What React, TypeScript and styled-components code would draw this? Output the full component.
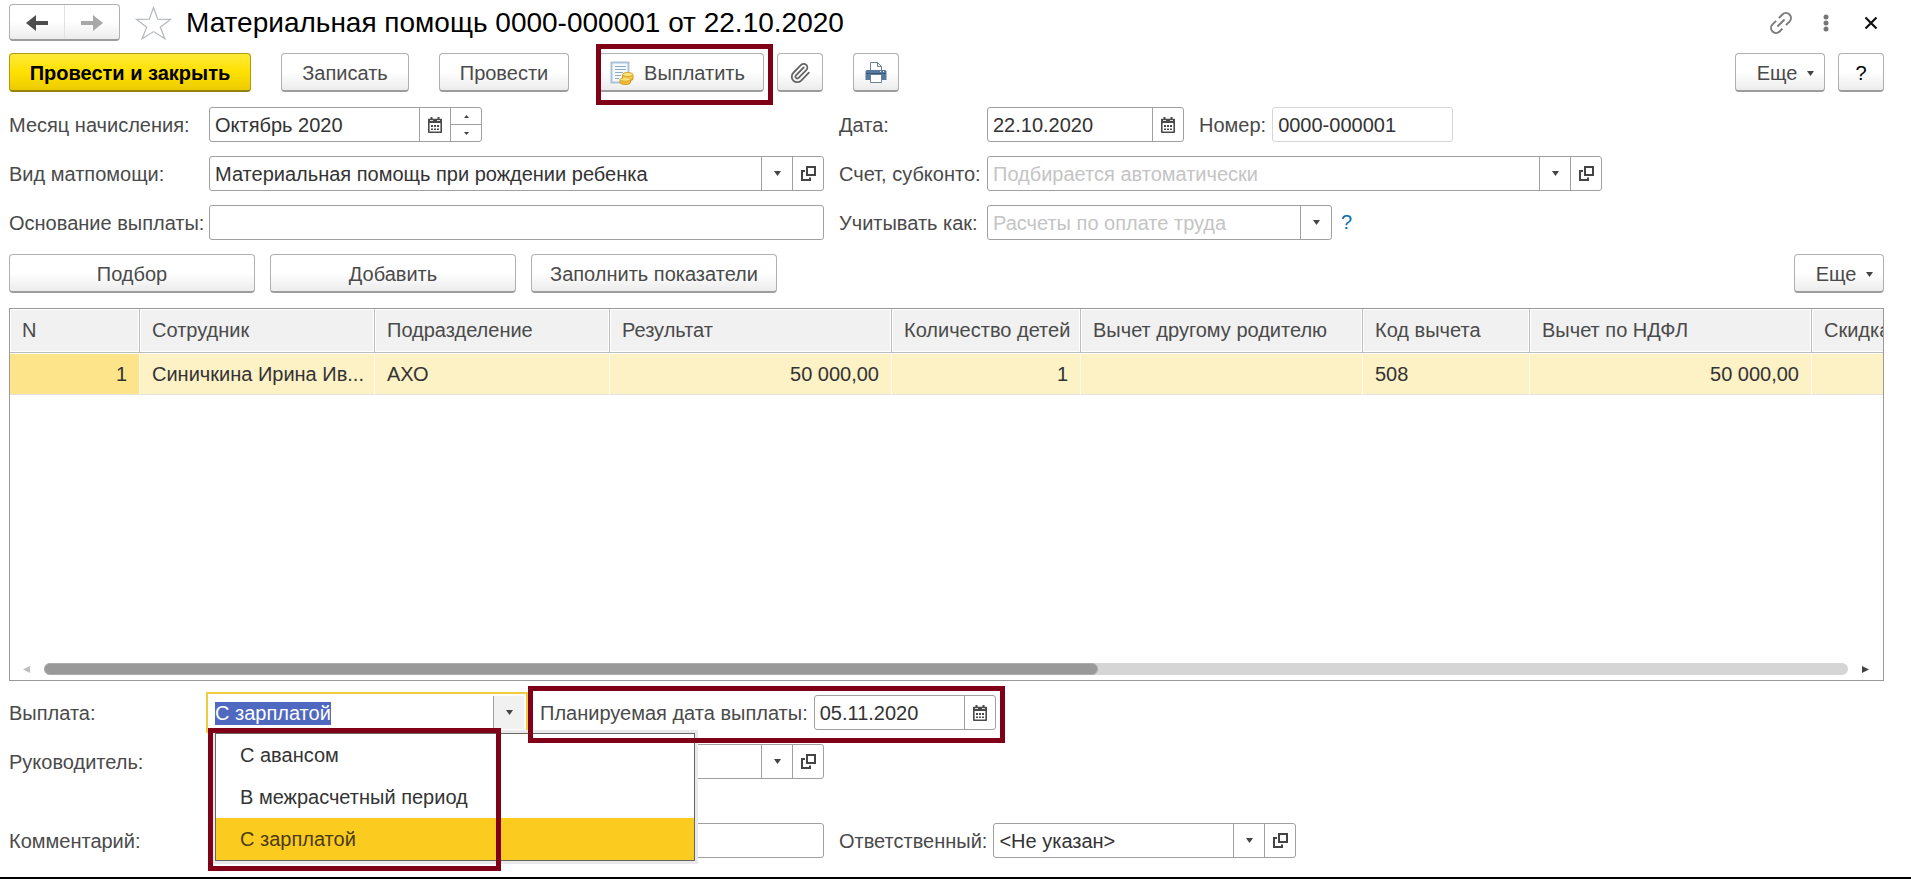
import React, { useEffect, useRef } from "react";
import styled, { createGlobalStyle, css } from "styled-components";
import { Paperclip } from "lucide-react";

const color = {
  text: "#4a4a4a",
  value: "#333333",
  line: "#a0a0a0",
  muted: "#c4c4c4",
  mark: "#800018",
  accent: "#fbcb20",
};

const GlobalStyle = createGlobalStyle`
  *, *::before, *::after { box-sizing: border-box; }
  body {
    margin: 0;
    background: #ffffff;
    color: ${color.text};
    font: 20px/23px "Liberation Sans", Arial, sans-serif;
  }
  button, input { font: inherit; color: inherit; }
  button { cursor: pointer; }
`;

const Page = styled.main`
  display: flex;
  flex-direction: column;
  min-height: 100vh;
  padding: 4px 27px 19px 9px;
  border-bottom: 2px solid #000000;
`;

const TitleBar = styled.header`
  display: flex;
  align-items: center;
  height: 37px;
  margin-bottom: 12px;
`;

const raised = css`
  border: 1px solid #b0b0b0;
  border-bottom: 2px solid #9c9c9c;
  border-radius: 4px;
  background: linear-gradient(#ffffff 50%, #ececec);
`;

const HistoryNav = styled.nav`
  ${raised}
  display: flex;
  width: 111px;
  height: 37px;
`;

const HistoryButton = styled.button`
  display: flex;
  flex: 1;
  align-items: center;
  justify-content: center;
  padding: 2px 0 0;
  border: 0;
  background: none;

  & + & {
    border-left: 1px solid #e2e2e2;
  }
`;

const PlainButton = styled.button`
  display: flex;
  align-items: center;
  justify-content: center;
  min-width: 26px;
  padding: 0;
  border: 0;
  background: none;
`;

const StarButton = styled(PlainButton)`
  margin: 0 14px 0 15px;
`;

const Title = styled.h1`
  flex: 1;
  margin: 0;
  color: #000000;
  font-size: 28px;
  font-weight: 400;
  line-height: 32px;
  white-space: nowrap;
`;

const WindowTools = styled.div`
  display: flex;
  align-items: center;
  gap: 19px;
`;

const Toolbar = styled.div<{ $gap: number; $bottom: number }>`
  display: flex;
  align-items: center;
  gap: ${(p) => p.$gap}px;
  margin-bottom: ${(p) => p.$bottom}px;
`;

const ButtonGroup = styled.div`
  display: flex;
  gap: 13px;
`;

const EndGroup = styled(ButtonGroup)`
  margin-left: auto;
`;

const Button = styled.button<{ $width: number }>`
  ${raised}
  display: flex;
  align-items: center;
  justify-content: center;
  gap: 10px;
  width: ${(p) => p.$width}px;
  height: 39px;
  padding: 2px 0 0;
  white-space: nowrap;
`;

const PrimaryButton = styled(Button)`
  border-color: #b09a10;
  border-bottom-color: #95820c;
  background: linear-gradient(#ffe93a, #ffe100 50%, #eccb00);
  color: #000000;
  font-weight: 700;
`;

const PayButton = styled(Button)`
  padding-right: 8px;
`;

const HelpButton = styled(Button)`
  color: #000000;
`;

const MoreButton = styled(Button)`
  padding-left: 11px;
`;

const Marked = styled.div`
  position: relative;
  display: flex;
  align-items: center;
`;

const Mark = styled.span<{ $inset: string }>`
  position: absolute;
  inset: ${(p) => p.$inset};
  z-index: 3;
  border: 5px solid ${color.mark};
  pointer-events: none;
`;

const Form = styled.div`
  display: grid;
  grid-template-columns: minmax(0, 815px) minmax(0, 1fr);
  gap: 14px 15px;
  margin-bottom: 14px;
`;

const FooterForm = styled(Form)`
  margin: 14px 0 0;
`;

const Row = styled.div<{ $tall?: boolean }>`
  display: flex;
  align-items: center;
  min-width: 0;
  margin-bottom: ${(p) => (p.$tall ? 30 : 0)}px;
`;

const WideRow = styled(Row)`
  grid-column: 1 / -1;
`;

const Label = styled.label<{ $width?: number }>`
  flex: none;
  width: ${(p) => (p.$width ? `${p.$width}px` : "auto")};
  padding-top: 2px;
  white-space: nowrap;
`;

const InlineLabel = styled(Label)`
  margin: 0 6px 0 15px;
`;

const EndLabel = styled(Label)`
  margin-right: 6px;
`;

const Field = styled.div<{ $width: number; $pale?: boolean; $focused?: boolean }>`
  display: flex;
  flex: 0 1 auto;
  width: ${(p) => p.$width}px;
  min-width: 0;
  height: 35px;
  border: 1px solid ${(p) => (p.$focused ? "transparent" : p.$pale ? "#d6d6d6" : color.line)};
  border-radius: ${(p) => (p.$focused ? 0 : 3)}px;
  background: #ffffff;
  box-shadow: ${(p) => (p.$focused ? "0 0 0 1px #ffffff, 0 0 0 3px #f2cc3c" : "none")};
`;

const TextInput = styled.input`
  flex: 1;
  width: 0;
  min-width: 0;
  padding: 2px 4px 0 5px;
  border: 0;
  outline: 0;
  background: none;
  color: ${color.value};

  &::placeholder {
    color: ${color.muted};
    opacity: 1;
  }
  &::selection {
    background: #5069c0;
    color: #ffffff;
  }
`;

const FieldButton = styled.button<{ $shaded?: boolean }>`
  display: flex;
  flex: none;
  align-items: center;
  justify-content: center;
  width: 31px;
  padding: 0;
  border: 0;
  border-left: 1px solid ${color.line};
  background: ${(p) => (p.$shaded ? "#f1f1f1" : "none")};
`;

const Spinner = styled.div`
  display: flex;
  flex: none;
  flex-direction: column;
  width: 31px;
  border-left: 1px solid ${color.line};
`;

const SpinButton = styled.button`
  display: flex;
  flex: 1;
  align-items: center;
  justify-content: center;
  padding: 0;
  border: 0;
  background: none;

  & + & {
    border-top: 1px solid ${color.line};
  }
`;

const HelpLink = styled.a`
  margin-left: 9px;
  color: #0f6cac;
  text-decoration: none;
`;

const TablePanel = styled.section`
  display: flex;
  flex: 1;
  flex-direction: column;
  min-height: 200px;
  border: 1px solid #999999;
`;

const TableViewport = styled.div`
  flex: 1;
  overflow: hidden;
`;

const Table = styled.table`
  width: 2084px;
  border-collapse: separate;
  border-spacing: 0;
  table-layout: fixed;
`;

const HeadCell = styled.th`
  height: 44px;
  padding: 0 6px 0 12px;
  border-right: 1px solid #bdbdbd;
  border-bottom: 1px solid #bdbdbd;
  background: #f1f1f1;
  box-shadow: inset 0 0 0 1px #ffffff;
  font-weight: 400;
  text-align: left;
  white-space: nowrap;
`;

const Cell = styled.td<{ $right?: boolean; $current?: boolean }>`
  height: 42px;
  padding: 0 ${(p) => (p.$right ? 12 : 4)}px 0 12px;
  overflow: hidden;
  border-top: 1px solid #ffffff;
  border-right: 1px solid #fffaea;
  border-bottom: 1px solid #e4e4dc;
  background: ${(p) => (p.$current ? "#fde48b" : "#fdf1c6")};
  color: ${color.value};
  text-align: ${(p) => (p.$right ? "right" : "left")};
  white-space: nowrap;
`;

const ScrollRow = styled.div`
  display: flex;
  align-items: center;
  gap: 14px;
  padding: 0 14px 5px 13px;
`;

const ScrollTrack = styled.div`
  flex: 1;
  height: 12px;
  border-radius: 6px;
  background: #d5d5d5;
`;

const ScrollThumb = styled.div`
  width: 58.4%;
  height: 12px;
  border: 1px solid #acacac;
  border-radius: 6px;
  background: #999999;
`;

const Combo = styled.div`
  position: relative;
  display: flex;
  flex: 0 1 316px;
  min-width: 0;
  margin-right: 15px;
`;

const Menu = styled.ul`
  position: absolute;
  top: 38px;
  left: 6px;
  z-index: 2;
  width: 480px;
  margin: 0;
  padding: 0;
  border: 1px solid #666666;
  background: #ffffff;
  box-shadow: 0 0 0 3px #e9e9e9;
  list-style: none;
`;

const MenuItem = styled.li`
  height: 42px;
  padding: 0 24px;
  color: ${color.value};
  line-height: 42px;

  &[aria-selected="true"] {
    background: ${color.accent};
    color: #4a3c10;
  }
`;

const ArrowIcon = ({ forward }: { forward?: boolean }) => (
  <svg width="22" height="16" viewBox="0 0 22 16" aria-hidden="true">
    <path
      d={forward ? "M0 6h12V0l10 8-10 8v-6H0z" : "M22 6H10V0L0 8l10 8v-6h12z"}
      fill={forward ? "#a8a8a8" : "#4d4d4d"}
    />
  </svg>
);

const StarIcon = () => (
  <svg width="37" height="34" viewBox="0 0 37 34" aria-hidden="true">
    <path
      d="M18.500 1.500l4.200 11.600 12.800.3-10.200 7.800 4.600 11.600-11.400-7.200-11.400 7.200 4.600-11.600L1.500 13.400l12.800-.3z"
      fill="#ffffff"
      stroke="#b4b8bb"
      strokeWidth="1.200"
    />
  </svg>
);

const LinkIcon = () => (
  <svg width="26" height="26" viewBox="0 0 26 26" fill="none" stroke="#7c7c7c" strokeWidth="2" aria-hidden="true">
    <g transform="rotate(-45 13 13)">
      <path d="M10 18H6A5 5 0 0 1 6 8h5M15 8h5a5 5 0 0 1 0 10h-5M8 13h10" />
    </g>
  </svg>
);

const KebabIcon = () => (
  <svg width="6" height="18" viewBox="0 0 6 18" fill="#777777" aria-hidden="true">
    <circle cx="3" cy="3" r="2.500" />
    <circle cx="3" cy="9" r="2.500" />
    <circle cx="3" cy="15" r="2.500" />
  </svg>
);

const CloseIcon = () => (
  <svg width="14" height="14" viewBox="0 0 14 14" stroke="#111111" strokeWidth="2.200" aria-hidden="true">
    <path d="M1.500 1.500l11 11M12.500 1.500l-11 11" />
  </svg>
);

const PayIcon = () => (
  <svg width="24" height="24" viewBox="0 0 24 24" aria-hidden="true">
    <path d="M1.500 1.500h17v20h-17z" fill="#f4f9fd" stroke="#a9c3d6" strokeWidth="2" />
    <path d="M5 5.500h11M5 8.500h11M5 11.500h8M5 14.500h6M5 17.500h4" stroke="#8eaabd" />
    <path d="M12.500 14v4c0 2.500 10.500 2.500 10.500 0v-4z" fill="#e9b42f" stroke="#cf961a" />
    <path d="M10 18.500v3c0 2.500 10.500 2.500 10.500 0v-3z" fill="#efbd38" stroke="#cf961a" />
    <ellipse cx="15.200" cy="18.500" rx="5.200" ry="1.800" fill="#fbe27c" stroke="#d8a223" />
    <ellipse cx="17.700" cy="13.500" rx="5.200" ry="2" fill="#fbe684" stroke="#d8a223" />
    <path d="M13 16c1.500 1.500 8 1.500 9.500 0" fill="none" stroke="#fbe27c" />
  </svg>
);

const PrinterIcon = () => (
  <svg width="22" height="22" viewBox="0 0 22 22" aria-hidden="true">
    <path d="M5.500 9V.5h7l4 4V9z" fill="#ffffff" stroke="#6d7f92" />
    <path d="M12.500.5v4h4" fill="none" stroke="#6d7f92" />
    <path d="M2 8h18a1.500 1.500 0 0 1 1.500 1.500V18H.5V9.500A1.500 1.500 0 0 1 2 8z" fill="#57799f" />
    <path d="M1 11.500h20" stroke="#36587e" />
    <path d="M15 9.500h1M18 9.500h1" stroke="#ffffff" />
    <path d="M5.500 12.500h11v8h-11z" fill="#ffffff" stroke="#6d7f92" />
  </svg>
);

const CalendarIcon = () => (
  <svg width="14" height="16" viewBox="0 0 14 16" aria-hidden="true">
    <path d="M.8 2.500h12.400v12.700H.8z" fill="#ffffff" stroke="#4a4a4a" strokeWidth="1.600" strokeLinejoin="round" />
    <path d="M0 3a1 1 0 0 1 1-1h12a1 1 0 0 1 1 1v3H0z" fill="#4a4a4a" />
    <path d="M2.500 0h2v3h-2zM9.500 0h2v3h-2z" fill="#4a4a4a" />
    <path d="M2 3.500h3M9 3.500h3" stroke="#dddddd" />
    <path d="M3 8h2v2H3zM6 8h2v2H6zM9 8h2v2H9zM3 11.500h2v1.500H3zM6 11.500h2v1.500H6zM9 11.500h2v1.500H9z" fill="#4a4a4a" />
  </svg>
);

const OpenIcon = () => (
  <svg width="15" height="15" viewBox="0 0 15 15" fill="none" stroke="#444444" strokeWidth="2" aria-hidden="true">
    <path d="M6 1h8v8H6zM4 5H1v9h8v-2.500" />
  </svg>
);

const CaretIcon = ({ up, small }: { up?: boolean; small?: boolean }) => (
  <svg width={small ? 5 : 7} height={small ? 3 : 5} viewBox="0 0 8 5" preserveAspectRatio="none" aria-hidden="true">
    <path d={up ? "M0 5h8L4 0z" : "M0 0h8L4 5z"} fill="#444444" />
  </svg>
);

const ScrollArrow = ({ left }: { left?: boolean }) => (
  <svg width="7" height="7" viewBox="0 0 7 7" aria-hidden="true">
    <path d={left ? "M7 0v7L0 3.500z" : "M0 0v7l7-3.500z"} fill={left ? "#bcbcbc" : "#444444"} />
  </svg>
);

const PickButton = () => (
  <FieldButton type="button" aria-label="Выбрать">
    <CaretIcon />
  </FieldButton>
);

const OpenButton = () => (
  <FieldButton type="button" aria-label="Открыть">
    <OpenIcon />
  </FieldButton>
);

const CalendarButton = () => (
  <FieldButton type="button" aria-label="Календарь">
    <CalendarIcon />
  </FieldButton>
);

const MoreMenuButton = () => (
  <MoreButton type="button" $width={90}>
    Еще
    <CaretIcon />
  </MoreButton>
);

const columns = [
  { title: "N", width: 130, value: "1", right: true },
  { title: "Сотрудник", width: 235, value: "Синичкина Ирина Ив..." },
  { title: "Подразделение", width: 235, value: "АХО" },
  { title: "Результат", width: 282, value: "50 000,00", right: true },
  { title: "Количество детей", width: 189, value: "1", right: true },
  { title: "Вычет другому родителю", width: 282, value: "" },
  { title: "Код вычета", width: 167, value: "508" },
  { title: "Вычет по НДФЛ", width: 282, value: "50 000,00", right: true },
  { title: "Скидка", width: 282, value: "" },
];

const payoutOptions = ["С авансом", "В межрасчетный период", "С зарплатой"];

export default function App() {
  const payout = useRef<HTMLInputElement>(null);

  useEffect(() => {
    payout.current?.focus();
    payout.current?.select();
  }, []);

  return (
    <>
      <GlobalStyle />
      <Page>
        <TitleBar>
          <HistoryNav>
            <HistoryButton type="button" aria-label="Назад">
              <ArrowIcon />
            </HistoryButton>
            <HistoryButton type="button" aria-label="Вперед">
              <ArrowIcon forward />
            </HistoryButton>
          </HistoryNav>
          <StarButton type="button" aria-label="В избранное">
            <StarIcon />
          </StarButton>
          <Title>Материальная помощь 0000-000001 от 22.10.2020</Title>
          <WindowTools>
            <PlainButton type="button" aria-label="Ссылка">
              <LinkIcon />
            </PlainButton>
            <PlainButton type="button" aria-label="Меню">
              <KebabIcon />
            </PlainButton>
            <PlainButton type="button" aria-label="Закрыть">
              <CloseIcon />
            </PlainButton>
          </WindowTools>
        </TitleBar>

        <Toolbar $gap={30} $bottom={15}>
          <PrimaryButton type="button" $width={242}>
            Провести и закрыть
          </PrimaryButton>
          <Button type="button" $width={128}>
            Записать
          </Button>
          <Button type="button" $width={130}>
            Провести
          </Button>
          <ButtonGroup>
            <Marked>
              <PayButton type="button" $width={165}>
                <PayIcon />
                Выплатить
              </PayButton>
              <Mark $inset="-9px -9px -13px -3px" />
            </Marked>
            <Button type="button" $width={46} aria-label="Файлы">
              <Paperclip size={22} strokeWidth={2} color="#666666" />
            </Button>
          </ButtonGroup>
          <Button type="button" $width={46} aria-label="Печать">
            <PrinterIcon />
          </Button>
          <EndGroup>
            <MoreMenuButton />
            <HelpButton type="button" $width={46}>
              ?
            </HelpButton>
          </EndGroup>
        </Toolbar>

        <Form>
          <Row>
            <Label htmlFor="month" $width={200}>
              Месяц начисления:
            </Label>
            <Field $width={273}>
              <TextInput id="month" defaultValue="Октябрь 2020" />
              <CalendarButton />
              <Spinner>
                <SpinButton type="button" aria-label="Следующий месяц">
                  <CaretIcon up small />
                </SpinButton>
                <SpinButton type="button" aria-label="Предыдущий месяц">
                  <CaretIcon small />
                </SpinButton>
              </Spinner>
            </Field>
          </Row>
          <Row>
            <Label htmlFor="date" $width={148}>
              Дата:
            </Label>
            <Field $width={197}>
              <TextInput id="date" defaultValue="22.10.2020" />
              <CalendarButton />
            </Field>
            <InlineLabel htmlFor="number">Номер:</InlineLabel>
            <Field $width={181} $pale>
              <TextInput id="number" defaultValue="0000-000001" />
            </Field>
          </Row>
          <Row>
            <Label htmlFor="kind" $width={200}>
              Вид матпомощи:
            </Label>
            <Field $width={615}>
              <TextInput id="kind" defaultValue="Материальная помощь при рождении ребенка" />
              <PickButton />
              <OpenButton />
            </Field>
          </Row>
          <Row>
            <Label htmlFor="account" $width={148}>
              Счет, субконто:
            </Label>
            <Field $width={615}>
              <TextInput id="account" placeholder="Подбирается автоматически" />
              <PickButton />
              <OpenButton />
            </Field>
          </Row>
          <Row>
            <Label htmlFor="basis" $width={200}>
              Основание выплаты:
            </Label>
            <Field $width={615}>
              <TextInput id="basis" />
            </Field>
          </Row>
          <Row>
            <Label htmlFor="treat" $width={148}>
              Учитывать как:
            </Label>
            <Field $width={345}>
              <TextInput id="treat" placeholder="Расчеты по оплате труда" />
              <PickButton />
            </Field>
            <HelpLink href="#help">?</HelpLink>
          </Row>
        </Form>

        <Toolbar $gap={15} $bottom={15}>
          <Button type="button" $width={246}>
            Подбор
          </Button>
          <Button type="button" $width={246}>
            Добавить
          </Button>
          <Button type="button" $width={246}>
            Заполнить показатели
          </Button>
          <EndGroup>
            <MoreMenuButton />
          </EndGroup>
        </Toolbar>

        <TablePanel>
          <TableViewport>
            <Table>
              <colgroup>
                {columns.map((c) => (
                  <col key={c.title} width={c.width} />
                ))}
              </colgroup>
              <thead>
                <tr>
                  {columns.map((c) => (
                    <HeadCell key={c.title} scope="col">
                      {c.title}
                    </HeadCell>
                  ))}
                </tr>
              </thead>
              <tbody>
                <tr>
                  {columns.map((c, i) => (
                    <Cell key={c.title} $right={c.right} $current={i === 0}>
                      {c.value}
                    </Cell>
                  ))}
                </tr>
              </tbody>
            </Table>
          </TableViewport>
          <ScrollRow>
            <ScrollArrow left />
            <ScrollTrack>
              <ScrollThumb />
            </ScrollTrack>
            <ScrollArrow />
          </ScrollRow>
        </TablePanel>

        <FooterForm>
          <WideRow>
            <Label htmlFor="payout" $width={200}>
              Выплата:
            </Label>
            <Combo>
              <Field $width={316} $focused>
                <TextInput
                  id="payout"
                  ref={payout}
                  role="combobox"
                  aria-expanded="true"
                  aria-controls="payout-options"
                  defaultValue="С зарплатой"
                />
                <FieldButton type="button" $shaded aria-label="Выбрать">
                  <CaretIcon />
                </FieldButton>
              </Field>
              <Menu id="payout-options" role="listbox">
                {payoutOptions.map((o) => (
                  <MenuItem key={o} role="option" aria-selected={o === "С зарплатой"}>
                    {o}
                  </MenuItem>
                ))}
              </Menu>
              <Mark $inset="33px 24px -141px -1px" />
            </Combo>
            <Marked>
              <EndLabel htmlFor="planned">Планируемая дата выплаты:</EndLabel>
              <Field $width={182}>
                <TextInput id="planned" defaultValue="05.11.2020" />
                <CalendarButton />
              </Field>
              <Mark $inset="-9px -9px -13px -12px" />
            </Marked>
          </WideRow>
          <WideRow $tall>
            <Label htmlFor="head" $width={200}>
              Руководитель:
            </Label>
            <Field $width={615}>
              <TextInput id="head" />
              <PickButton />
              <OpenButton />
            </Field>
          </WideRow>
          <Row>
            <Label htmlFor="comment" $width={200}>
              Комментарий:
            </Label>
            <Field $width={615}>
              <TextInput id="comment" />
            </Field>
          </Row>
          <Row>
            <EndLabel htmlFor="responsible">Ответственный:</EndLabel>
            <Field $width={303}>
              <TextInput id="responsible" defaultValue="<Не указан>" />
              <PickButton />
              <OpenButton />
            </Field>
          </Row>
        </FooterForm>
      </Page>
    </>
  );
}
